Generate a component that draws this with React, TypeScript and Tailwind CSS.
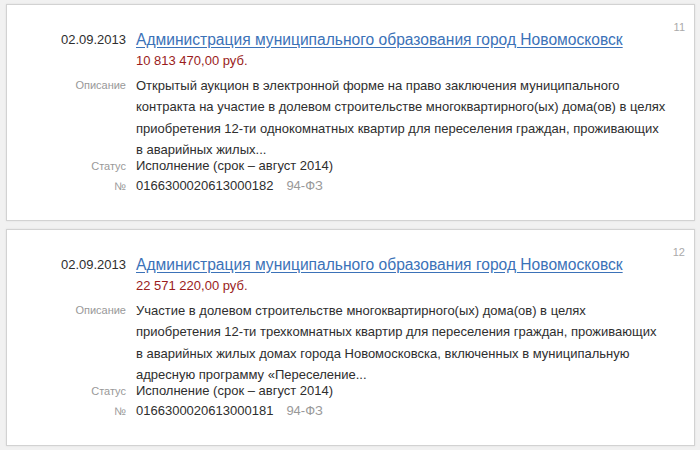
const items = [
  {
    n: 11,
    date: "02.09.2013",
    title: "Администрация муниципального образования город Новомосковск",
    price: "10 813 470,00 руб.",
    desc: [
      "Открытый аукцион в электронной форме на право заключения муниципального",
      "контракта на участие в долевом строительстве многоквартирного(ых) дома(ов) в целях",
      "приобретения 12-ти однокомнатных квартир для переселения граждан, проживающих",
      "в аварийных жилых...",
    ],
    status: "Исполнение (срок – август 2014)",
    num: "0166300020613000182",
    law: "94-ФЗ",
  },
  {
    n: 12,
    date: "02.09.2013",
    title: "Администрация муниципального образования город Новомосковск",
    price: "22 571 220,00 руб.",
    desc: [
      "Участие в долевом строительстве многоквартирного(ых) дома(ов) в целях",
      "приобретения 12-ти трехкомнатных квартир для переселения граждан, проживающих",
      "в аварийных жилых домах города Новомосковска, включенных в муниципальную",
      "адресную программу «Переселение...",
    ],
    status: "Исполнение (срок – август 2014)",
    num: "0166300020613000181",
    law: "94-ФЗ",
  },
];

function Card({ item }: { item: (typeof items)[number] }) {
  return (
    <div className="relative h-[217px] border border-[#d2d2d2] bg-white shadow-[0_0_2px_rgba(0,0,0,0.08)] pt-[25px]">
      <span className="absolute right-[9px] top-[15px] text-[11px] leading-[14px] text-[#aaaaaa]">
        {item.n}
      </span>
      <div className="grid grid-cols-[119px_1fr] gap-x-[10px] text-[13px] text-[#2e2e2e]">
        <div className="text-right leading-[20px]">{item.date}</div>
        <div className="leading-[20px]">
          <a href="#" className="text-[15.6px] text-[#3b72b8] underline underline-offset-[2px]">
            {item.title}
          </a>
        </div>
        <div />
        <div className="leading-[20px] text-[#9a1c1c]">{item.price}</div>

        <div className="mt-[4px] text-right text-[11px] leading-[21px] text-[#999999]">Описание</div>
        <div className="mt-[4px] leading-[21.3px]">
          {item.desc.map((l) => (
            <div key={l}>{l}</div>
          ))}
        </div>

        <div className="mt-[-4px] text-right text-[11px] leading-[20px] text-[#999999]">Статус</div>
        <div className="mt-[-4px] leading-[20px]">{item.status}</div>

        <div className="text-right text-[11px] leading-[20px] text-[#999999]">№</div>
        <div className="flex gap-[13px] leading-[20px]">
          <span>{item.num}</span>
          <span className="text-[#999999]">{item.law}</span>
        </div>
      </div>
    </div>
  );
}

export default function App() {
  return (
    <div
      className="flex h-[450px] w-[700px] flex-col gap-[8px] bg-[#f1f1f1] pl-[6px] pr-[5px] pt-[4px]"
      style={{ fontFamily: '"Liberation Sans", Arial, sans-serif' }}
    >
      {items.map((it) => (
        <Card key={it.n} item={it} />
      ))}
    </div>
  );
}
